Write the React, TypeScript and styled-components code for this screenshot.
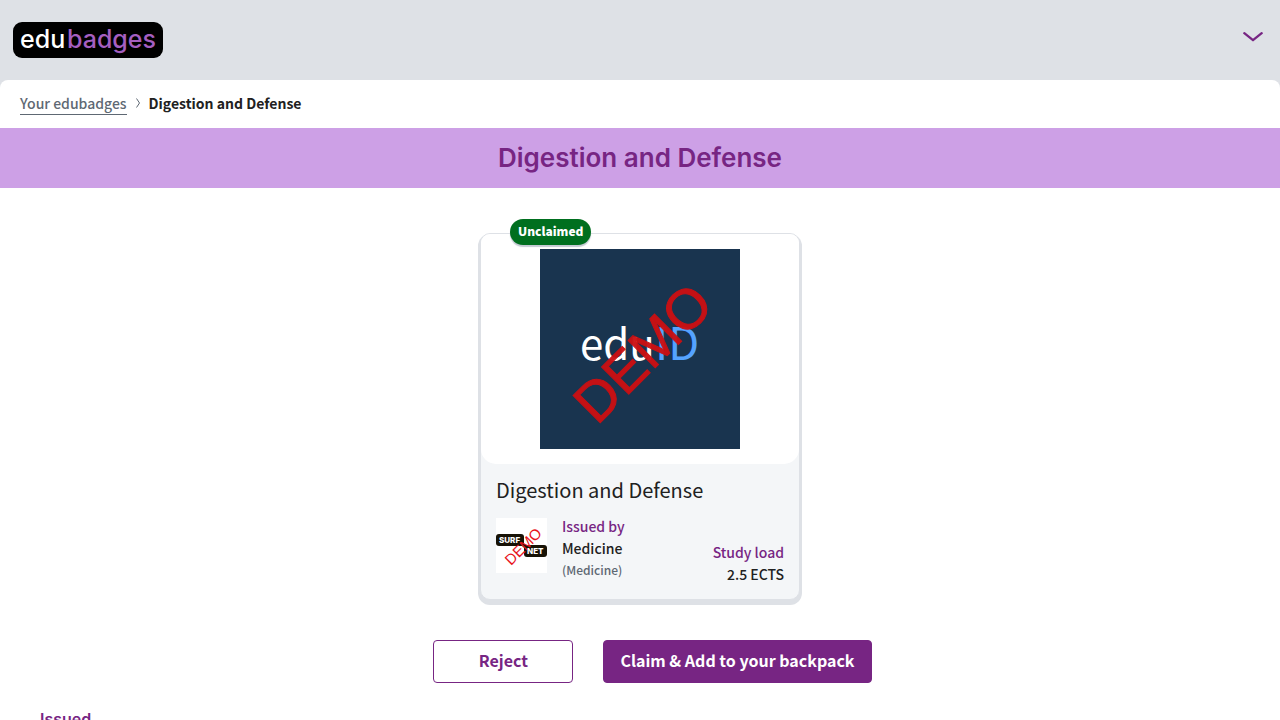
import React from "react";
import styled, { createGlobalStyle } from "styled-components";

const sans = `"Noto Sans CJK JP", "Noto Sans", sans-serif`;
const display = `Inter, "Open Sans", sans-serif`;
const purple = "#772583";
const grey = "#dee1e6";

const GlobalStyle = createGlobalStyle`
  *, *::before, *::after { box-sizing: border-box; }
  body {
    margin: 0;
    background: #ffffff;
    color: #212121;
    font-family: ${sans};
    font-size: 14px;
    font-weight: 500;
    line-height: 22px;
  }
`;

const Page = styled.div`
  background: ${grey};
`;

const Header = styled.header`
  display: flex;
  align-items: flex-start;
  justify-content: space-between;
  height: 80px;
  padding: 22px 13px;
`;

const LogoLink = styled.a`
  display: block;
  height: 36px;
`;

const MenuButton = styled.button`
  display: flex;
  padding: 4px;
  border: 0;
  background: none;
  cursor: pointer;
`;

const Main = styled.main`
  overflow: hidden;
  border-radius: 8px 8px 0 0;
  background: #ffffff;
`;

const Breadcrumb = styled.nav`
  display: flex;
  align-items: center;
  gap: 8px;
  height: 48px;
  padding: 0 20px 2px;
`;

const CrumbLink = styled.a`
  margin-top: 1px;
  border-bottom: 1px solid #5e6873;
  color: #5e6873;
  text-decoration: none;
`;

const CrumbCurrent = styled.span`
  font-weight: 700;
`;

const Banner = styled.div`
  display: flex;
  align-items: center;
  justify-content: center;
  height: 60px;
  background: #cda0e6;
`;

const BannerTitle = styled.h1`
  margin: 0;
  color: ${purple};
  font: 600 26px/32px ${display};
`;

const Content = styled.div`
  display: flex;
  flex-direction: column;
  align-items: center;
  padding: 45px 40px 20px;
`;

const Card = styled.article`
  position: relative;
  width: 100%;
  max-width: 320px;
  border: 1px solid ${grey};
  border-radius: 10px;
  background: #f4f6f8;
  box-shadow: 0 3px 0 2px ${grey};
`;

const Status = styled.span`
  position: absolute;
  top: -15px;
  left: 29px;
  padding: 1px 8px 3px;
  border-radius: 13px;
  background: #006f1f;
  box-shadow: 0 2px 1px #c3c9d2;
  color: #ffffff;
  font-size: 12px;
  font-weight: 900;
`;

const CardPicture = styled.div`
  display: flex;
  justify-content: center;
  padding: 15px;
  border-radius: 9px 9px 15px 15px;
  background: #ffffff;
`;

const CardBody = styled.div`
  padding: 14px 15px;
`;

const CardTitle = styled.h2`
  margin: 0 0 13px;
  font-size: 20px;
  font-weight: 400;
  line-height: 24px;
`;

const CardDetails = styled.div`
  display: flex;
  gap: 15px;
`;

const IssuerLogo = styled.svg`
  flex: none;
  margin-top: 3px;
`;

const Detail = styled.div<{ $end?: boolean }>`
  display: flex;
  flex-direction: column;
  ${({ $end }) => $end && "margin-left: auto; padding-top: 26px; text-align: right;"}
`;

const Label = styled.span`
  color: ${purple};
`;

const Note = styled.span`
  color: #5e6873;
  font-size: 12px;
`;

const Actions = styled.div`
  display: flex;
  gap: 30px;
  margin: 40px 0 0 25px;
`;

const Button = styled.button<{ $primary?: boolean }>`
  min-width: 140px;
  height: 43px;
  padding: 0 16px 3px;
  border: 1px solid ${purple};
  border-radius: 4px;
  background: ${({ $primary }) => ($primary ? purple : "#ffffff")};
  color: ${({ $primary }) => ($primary ? "#ffffff" : purple)};
  font: 700 16px/24px ${sans};
  cursor: pointer;
`;

const SectionTitle = styled.h3`
  align-self: stretch;
  margin: 24px 0 0;
  color: ${purple};
  font: 600 16px/24px ${display};
`;

const EdubadgesLogo = () => (
  <svg width="150" height="36" viewBox="0 0 150 36" role="img" aria-label="edubadges">
    <rect width="150" height="36" rx="9" fill="#000000" />
    <g fontFamily="Inter, sans-serif" fontSize="25" fontWeight="500">
      <text x="7" y="26" fill="#ffffff">edu</text>
      <text x="54" y="26" fill="#a55fc0">badges</text>
    </g>
  </svg>
);

const BadgePicture = () => (
  <svg width="200" height="200" viewBox="0 0 200 200" role="img" aria-label="eduID demo badge">
    <rect width="200" height="200" fill="#19344f" />
    <g fontFamily={sans} fontWeight="400">
      <text x="40" y="111" fontSize="42" fill="#ffffff">edu</text>
      <text x="115" y="111" fontSize="45" fill="#55a3ff">ID</text>
    </g>
    <text
      transform="translate(57 177) rotate(-45)"
      fontFamily="Liberation Sans, sans-serif"
      fontSize="56"
      fontWeight="400"
      fill="#cb1013"
      stroke="#cb1013"
      strokeWidth="1"
      opacity="0.96"
    >
      DEMO
    </text>
  </svg>
);

const SurfnetLogo = () => (
  <IssuerLogo width="51" height="55" viewBox="0 0 51 55" role="img" aria-label="SURFnet">
    <rect width="51" height="55" fill="#ffffff" />
    <rect y="16" width="28" height="12" rx="3" fill="#171206" />
    <rect x="28" y="27" width="23" height="12" rx="3" fill="#171206" />
    <path d="M24 24 31 30" stroke="#171206" strokeWidth="3" />
    <g fontFamily="Inter, sans-serif" fontSize="8" fontWeight="800" fill="#ffffff">
      <text x="3" y="25">SURF</text>
      <text x="31" y="36">NET</text>
    </g>
    <text
      transform="translate(15 48) rotate(-45)"
      fontFamily="Liberation Sans, sans-serif"
      fontSize="15"
      fontWeight="400"
      fill="#e8141c"
    >
      DEMO
    </text>
  </IssuerLogo>
);

export default function App() {
  return (
    <>
      <GlobalStyle />
      <Page>
        <Header>
          <LogoLink href="#">
            <EdubadgesLogo />
          </LogoLink>
          <MenuButton aria-label="Open menu">
            <svg width="20" height="20" viewBox="0 0 20 20" fill="none" stroke={purple} strokeWidth="2.3" strokeLinecap="round" strokeLinejoin="round">
              <path d="M1.3 7.2 10 14.2 18.7 7.2" />
            </svg>
          </MenuButton>
        </Header>
        <Main>
          <Breadcrumb aria-label="Breadcrumb">
            <CrumbLink href="#">Your edubadges</CrumbLink>
            <svg width="6" height="10" viewBox="0 0 6 10" fill="none" stroke="#5e6873">
              <path d="M1.5.5 4.5 5 1.5 9.5" />
            </svg>
            <CrumbCurrent aria-current="page">Digestion and Defense</CrumbCurrent>
          </Breadcrumb>
          <Banner>
            <BannerTitle>Digestion and Defense</BannerTitle>
          </Banner>
          <Content>
            <Card>
              <CardPicture>
                <BadgePicture />
              </CardPicture>
              <Status>Unclaimed</Status>
              <CardBody>
                <CardTitle>Digestion and Defense</CardTitle>
                <CardDetails>
                  <SurfnetLogo />
                  <Detail>
                    <Label>Issued by</Label>
                    <span>Medicine</span>
                    <Note>(Medicine)</Note>
                  </Detail>
                  <Detail $end>
                    <Label>Study load</Label>
                    <span>2.5 ECTS</span>
                  </Detail>
                </CardDetails>
              </CardBody>
            </Card>
            <Actions>
              <Button type="button">Reject</Button>
              <Button type="button" $primary>Claim &amp; Add to your backpack</Button>
            </Actions>
            <SectionTitle>Issued</SectionTitle>
          </Content>
        </Main>
      </Page>
    </>
  );
}
